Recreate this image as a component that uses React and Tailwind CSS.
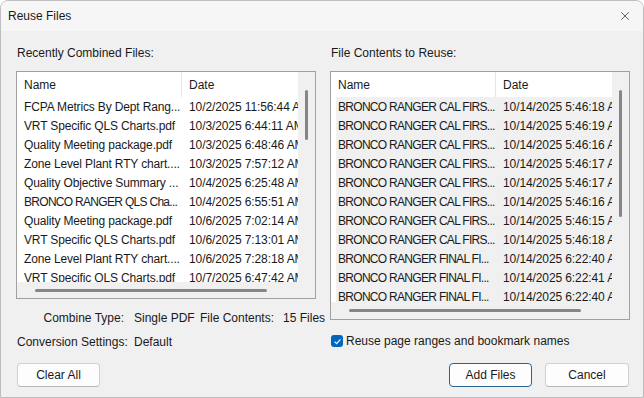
import { X } from 'lucide-react'

const recentFiles = [
    ['FCPA Metrics By Dept Rang...', '10/2/2025 11:56:44 AM'],
    ['VRT Specific QLS Charts.pdf', '10/3/2025 6:44:11 AM'],
    ['Quality Meeting package.pdf', '10/3/2025 6:48:46 AM'],
    ['Zone Level Plant RTY chart....', '10/3/2025 7:57:12 AM'],
    ['Quality Objective Summary ...', '10/4/2025 6:25:48 AM'],
    ['BRONCO RANGER QLS Cha...', '10/4/2025 6:55:51 AM'],
    ['Quality Meeting package.pdf', '10/6/2025 7:02:14 AM'],
    ['VRT Specific QLS Charts.pdf', '10/6/2025 7:13:01 AM'],
    ['Zone Level Plant RTY chart....', '10/6/2025 7:28:18 AM'],
    ['VRT Specific QLS Charts.pdf', '10/7/2025 6:47:42 AM'],
]

const contents = [
    ['BRONCO RANGER CAL FIRS...', '10/14/2025 5:46:18 AM'],
    ['BRONCO RANGER CAL FIRS...', '10/14/2025 5:46:19 AM'],
    ['BRONCO RANGER CAL FIRS...', '10/14/2025 5:46:16 AM'],
    ['BRONCO RANGER CAL FIRS...', '10/14/2025 5:46:17 AM'],
    ['BRONCO RANGER CAL FIRS...', '10/14/2025 5:46:17 AM'],
    ['BRONCO RANGER CAL FIRS...', '10/14/2025 5:46:16 AM'],
    ['BRONCO RANGER CAL FIRS...', '10/14/2025 5:46:15 AM'],
    ['BRONCO RANGER CAL FIRS...', '10/14/2025 5:46:18 AM'],
    ['BRONCO RANGER FINAL FI...', '10/14/2025 6:22:40 AM'],
    ['BRONCO RANGER FINAL FI...', '10/14/2025 6:22:41 AM'],
    ['BRONCO RANGER FINAL FI...', '10/14/2025 6:22:40 AM'],
]

// listview with header, rows and both scrollbars
function FileList({ rows, height, rowsHeight, thumbH, hThumb, shaded }) {
    return (
        <div className={`${height} w-[300px] border border-[#a0a0a0] bg-white flex`}>
            <div className="w-[281px] shrink-0 flex flex-col overflow-hidden">
                <div className="h-[25px] flex items-center shrink-0">
                    <div className="w-[165px] shrink-0 pl-[7px] border-r border-[#e5e5e5] h-full flex items-center">Name</div>
                    <div className="pl-[7px]">Date</div>
                </div>
                <div className={`${rowsHeight} overflow-hidden shrink-0`}>
                    {rows.map(([name, date], i) => (
                        <div key={i} className={`h-[19px] flex items-center whitespace-nowrap ${shaded ? 'ml-[5px] bg-[#f0f0f0]' : ''}`}>
                            <div className={`${shaded ? 'w-[160px] pl-[2px]' : 'w-[165px] pl-[7px]'} ${name.startsWith('BRONCO') ? 'tracking-[-0.7px]' : 'tracking-[-0.15px]'} shrink-0 overflow-hidden`}>{name}</div>
                            <div className="pl-[7px] shrink-0 tracking-[-0.1px]">{date}</div>
                        </div>
                    ))}
                </div>
                <div className="flex-1 bg-[#f0f0f0] flex items-center">
                    <div className={`${hThumb} h-[3px] rounded-full bg-[#868686]`}></div>
                </div>
            </div>
            <div className="w-[17px] shrink-0 bg-[#f0f0f0] flex justify-center pt-[18px]">
                <div className={`${thumbH} w-[3px] rounded-full bg-[#868686]`}></div>
            </div>
        </div>
    )
}

function Button({ children, primary, width }) {
    return (
        <button className={`${width} h-[24px] shrink-0 rounded-[4px] bg-[#fdfdfd] border ${primary ? 'border-[#2a6495]' : 'border-[#d0d0d0] border-b-[#b8b8b8]'} text-[12px] flex items-center justify-center`}>
            {children}
        </button>
    )
}

export default function App() {
    return (
        <div className="w-[644px] h-[398px] bg-[#f0f0f0] font-['Liberation_Sans',Arial,sans-serif] text-[12px] leading-[14px] text-[#1a1a1a] flex flex-col overflow-hidden border border-[#bdbdbd] rounded-t-[8px]">
            <div className="h-[30px] bg-[#f6f6f6] flex items-center justify-between pl-[7px] pr-[11px] shrink-0">
                <span>Reuse Files</span>
                <X className="w-[14px] h-[14px] text-[#333]" strokeWidth={1.3} />
            </div>

            <div className="flex gap-[14px] pl-[15px] pt-[15px]">
                <div className="w-[300px] shrink-0 flex flex-col whitespace-nowrap">
                    <div className="pl-[1px]">Recently Combined Files:</div>
                    <div className="mt-[11px]">
                        <FileList rows={recentFiles} height="h-[228px]" rowsHeight="h-[185px]" thumbH="h-[50px]" hThumb="ml-[18px] w-[232px]" />
                    </div>
                    <div className="mt-[12px] flex pl-[1px]">
                        <div className="w-[107px] shrink-0 text-right">Combine Type:</div>
                        <div className="ml-[10px] w-[66px] shrink-0">Single PDF</div>
                        <div className="shrink-0">File Contents:</div>
                        <div className="ml-[9px] shrink-0">15 Files</div>
                    </div>
                    <div className="mt-[10px] flex pl-[1px]">
                        <div className="w-[107px] shrink-0 text-right">Conversion Settings:</div>
                        <div className="ml-[10px]">Default</div>
                    </div>
                </div>

                <div className="w-[300px] shrink-0 flex flex-col whitespace-nowrap">
                    <div className="pl-[1px]">File Contents to Reuse:</div>
                    <div className="mt-[11px]">
                        <FileList rows={contents} height="h-[249px]" rowsHeight="h-[205px]" thumbH="h-[127px]" hThumb="ml-[18px] w-[232px]" shaded />
                    </div>
                    <div className="mt-[14px] flex items-center gap-[3px] pl-[1px]">
                        <div className="w-[12px] h-[12px] rounded-[3px] bg-[#0067c0] flex items-center justify-center">
                            <svg width="9" height="9" viewBox="0 0 10 10">
                                <path d="M1.8 5.2 L4 7.4 L8.3 2.6" fill="none" stroke="white" strokeWidth="1.3" />
                            </svg>
                        </div>
                        <span>Reuse page ranges and bookmark names</span>
                    </div>
                </div>
            </div>

            <div className="mt-[14px] flex items-center pl-[16px] pr-[14px]">
                <Button width="w-[83px]">Clear All</Button>
                <div className="flex-1"></div>
                <Button primary width="w-[83px]">Add Files</Button>
                <div className="w-[13px] shrink-0"></div>
                <Button width="w-[84px]">Cancel</Button>
            </div>
        </div>
    )
}
